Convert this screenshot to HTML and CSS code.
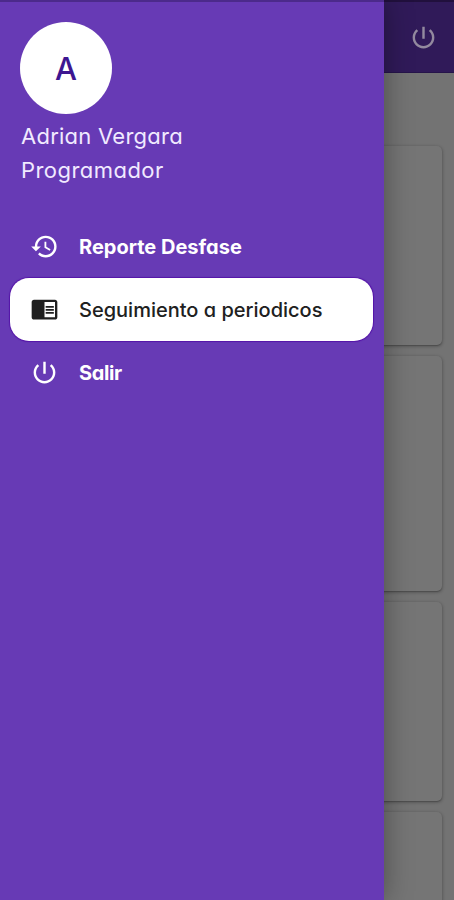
FILE: index.html
```html
<!DOCTYPE html>
<html lang="es">
<head>
<meta charset="utf-8">
<title>Seguimiento a periodicos</title>
<link rel="stylesheet" href="styles.css">
</head>
<body>
<main class="page">
  <header class="appbar">
    <svg class="icon" viewBox="0 0 24 24"><path d="M13 3h-2v10h2V3zm4.83 2.17l-1.42 1.42C17.99 7.86 19 9.81 19 12c0 3.87-3.13 7-7 7s-7-3.13-7-7c0-2.19 1.01-4.14 2.58-5.42L6.17 5.17C4.23 6.82 3 9.26 3 12c0 4.97 4.03 9 9 9s9-4.03 9-9c0-2.74-1.23-5.18-3.17-6.83z"/></svg>
  </header>
  <div class="cards">
    <section class="card"></section>
    <section class="card card-tall"></section>
    <section class="card"></section>
    <section class="card"></section>
  </div>
</main>
<aside class="drawer">
  <div class="profile">
    <div class="avatar">A</div>
    <div class="name">Adrian Vergara</div>
    <div class="role">Programador</div>
  </div>
  <nav class="menu">
    <a class="item">
      <svg class="icon" viewBox="0 0 24 24"><path d="M13 3a9 9 0 0 0-9 9H1l3.89 3.89.07.14L9 12H6c0-3.87 3.13-7 7-7s7 3.13 7 7-3.13 7-7 7c-1.93 0-3.68-.79-4.94-2.06l-1.42 1.42A8.954 8.954 0 0 0 13 21a9 9 0 0 0 0-18zm-1 5v5l4.28 2.54.72-1.21-3.5-2.08V8H12z"/></svg>
      <span>Reporte Desfase</span>
    </a>
    <a class="item active">
      <svg class="icon icon-book" viewBox="0 0 24 24"><path d="M21 4H3c-1.1 0-2 .9-2 2v13c0 1.1.9 2 2 2h18c1.1 0 2-.9 2-2V6c0-1.1-.9-2-2-2zm0 15h-9V6h9v13zm-1-9.500h-7V11h7V9.500zm0 2.500h-7v1.500h7V12zm0 2.500h-7V16h7v-1.500z"/></svg>
      <span>Seguimiento a periodicos</span>
    </a>
    <a class="item">
      <svg class="icon" viewBox="0 0 24 24"><path d="M13 3h-2v10h2V3zm4.83 2.17l-1.42 1.42C17.99 7.86 19 9.81 19 12c0 3.87-3.13 7-7 7s-7-3.13-7-7c0-2.19 1.01-4.14 2.58-5.42L6.17 5.17C4.23 6.82 3 9.26 3 12c0 4.97 4.03 9 9 9s9-4.03 9-9c0-2.74-1.23-5.18-3.17-6.83z"/></svg>
      <span class="label-exit">Salir</span>
    </a>
  </nav>
</aside>
</body>
</html>
```
FILE: styles.css
```css
* { box-sizing: border-box; }
body {
  margin: 0;
  height: 900px;
  position: relative;
  overflow: hidden;
  font-family: Inter, "Open Sans", sans-serif;
  font-feature-settings: "cv11";
}
.icon { width: 29px; height: 29px; fill: currentColor; flex: none; }
.icon-book { height: 28px; margin-top: -2px; }
.page { height: 900px; background: #737373; overflow: hidden; }
.appbar {
  height: 73px;
  display: flex;
  align-items: center;
  justify-content: flex-end;
  padding: 1px 16px 0 0;
  background: #301a59;
  border-top: 2px solid #21103d;
  border-bottom: 1px solid #26144a;
  color: #938a9f;
}
.cards { padding: 73px 12px 0 8px; }
.card {
  height: 199px;
  margin-bottom: 11px;
  background: #757575;
  border-radius: 5px;
  box-shadow: 0 1px 3px 1px rgba(0, 0, 0, .2), 0 1px 1px rgba(0, 0, 0, .18);
}
.card-tall { height: 235px; }
.drawer {
  position: absolute;
  inset: 0 auto 0 0;
  width: 384px;
  background: #673ab5;
  border-top: 2px solid #4c2a8b;
  box-shadow: 0 0 26px rgba(0, 0, 0, .36);
  color: #fff;
}
.profile { padding: 20px 21px 0; }
.avatar {
  width: 92px;
  height: 92px;
  margin-left: -1px;
  padding-top: 1px;
  border-radius: 50%;
  background: #fff;
  color: #3d1691;
  display: flex;
  align-items: center;
  justify-content: center;
  font-size: 31px;
  font-weight: 500;
}
.name, .role { height: 34px; line-height: 34px; font-size: 22px; white-space: nowrap; color: #f1eaff; }
.name { margin-top: 5px; letter-spacing: .25px; }
.role { letter-spacing: .45px; }
.menu { padding: 28px 11px 0 10px; }
.item {
  height: 63px;
  display: flex;
  align-items: center;
  gap: 20px;
  padding-left: 20px;
  border-radius: 19px;
  font-size: 20px;
  font-weight: 700;
  white-space: nowrap;
}
.active { background: #fff; color: #202020; font-weight: 500; box-shadow: 0 0 1px 1px #5514a8; }
.label-exit { letter-spacing: -.4px; }
```
